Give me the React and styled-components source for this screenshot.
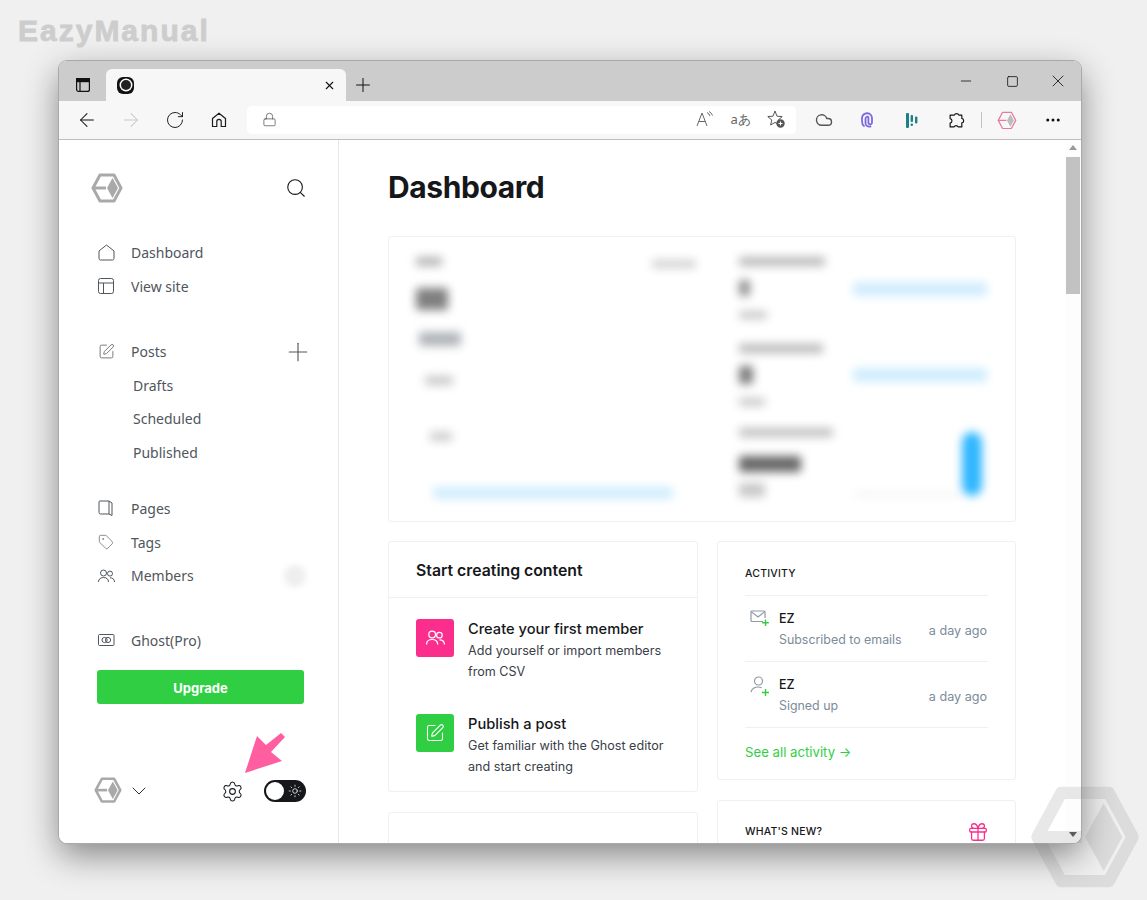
import React from 'react';
import styled, { createGlobalStyle } from 'styled-components';
import {
  ArrowLeft, ArrowRight, RotateCw, Lock, Cloud, Ellipsis, Gift, Plus, X, Minus, Square,
  Search, Settings, ChevronDown, SquarePen, Tag, Sun,
} from 'lucide-react';

const Global = createGlobalStyle`
  html, body { margin: 0; padding: 0; background: #f0f0f0; }
  body { font-family: "Noto Sans", "Open Sans", sans-serif; }
`;

const Page = styled.div`
  position: relative;
  width: 1147px;
  height: 900px;
  overflow: hidden;
  padding: 61px 0 0 59px;
  box-sizing: border-box;
`;

const Brand = styled.div`
  position: absolute;
  left: 18px;
  top: 13px;
  font: 700 30px/36px "Liberation Sans", sans-serif;
  letter-spacing: 2px;
  color: #cdcdcd;
  -webkit-text-stroke: 0.8px #cdcdcd;
`;

const WindowFrame = styled.div`
  width: 1022px;
  height: 782px;
  border-radius: 8px;
  overflow: hidden;
  background: #fff;
  box-shadow: 0 0 0 1px #a9a9a9, 0 12px 34px rgba(0, 0, 0, 0.45);
  display: flex;
  flex-direction: column;
`;

const TitleBar = styled.div`
  height: 40px;
  background: #cccccc;
  display: flex;
  align-items: flex-end;
  padding-left: 10px;
  flex: none;
`;

const SideTab = styled.div`
  width: 28px;
  height: 32px;
  margin-right: 9px;
  display: flex;
  align-items: center;
  justify-content: center;
`;

const Tab = styled.div`
  width: 240px;
  height: 32px;
  background: #f7f7f7;
  border-radius: 6px 6px 0 0;
  display: flex;
  align-items: center;
  justify-content: space-between;
  padding: 0 10px 0 11px;
  box-sizing: border-box;
`;

const Favicon = styled.div`
  width: 17px;
  height: 17px;
  border-radius: 6px;
  background: #111;
  display: flex;
  align-items: center;
  justify-content: center;
  &::after {
    content: "";
    width: 10px;
    height: 10px;
    border-radius: 50%;
    background: #222;
    box-shadow: 0 0 0 1.5px #fff;
  }
`;

const NewTab = styled.div`
  height: 32px;
  margin-left: 6px;
  display: flex;
  align-items: center;
`;

const WindowControls = styled.div`
  margin-left: auto;
  height: 40px;
  display: flex;
`;

const WindowControl = styled.div`
  width: 46px;
  display: flex;
  align-items: center;
  justify-content: center;
`;

const Toolbar = styled.div`
  height: 38px;
  background: #f7f7f7;
  border-bottom: 1px solid #bdbdbd;
  display: flex;
  align-items: center;
  padding-left: 6px;
  flex: none;
`;

const ToolButton = styled.div`
  width: 44px;
  height: 28px;
  flex: none;
  display: flex;
  align-items: center;
  justify-content: center;
`;

const Address = styled.div`
  width: 549px;
  height: 28px;
  margin: 0 6px;
  background: #fff;
  border-radius: 5px;
  display: flex;
  align-items: center;
  padding: 0 2px 2px 15px;
  box-sizing: border-box;
`;

const AddressActions = styled.div`
  margin-left: auto;
  display: flex;
  align-items: center;
`;

const AddressAction = styled.div`
  width: 35.5px;
  height: 28px;
  display: flex;
  align-items: center;
  justify-content: center;
  font: 400 13px "Noto Sans", sans-serif;
  color: #666;
`;

const ToolDivider = styled.div`
  width: 1px;
  height: 16px;
  background: #c4c4c4;
  margin: 0 3px;
  flex: none;
`;

const LogoSlot = styled(ToolButton)`
  margin-right: 2px;
`;

const Body = styled.div`
  flex: 1;
  display: flex;
  min-height: 0;
  background: #fff;
`;

const Sidebar = styled.aside`
  position: relative;
  width: 280px;
  flex: none;
  box-sizing: border-box;
  border-right: 1px solid #e6e8ea;
  padding: 33px 32px 0 38px;
  display: flex;
  flex-direction: column;
`;

const SideHead = styled.div`
  height: 30px;
  display: flex;
  align-items: center;
  justify-content: space-between;
  margin: 0 -1px 33px -6px;
`;

const NavGroup = styled.div`
  display: flex;
  flex-direction: column;
  margin-bottom: ${(p) => p.$gap || 0}px;
`;

const NavItem = styled.div`
  height: 33.5px;
  display: flex;
  align-items: center;
  color: #50565c;
  font-size: 14px;
`;

const NavIcon = styled.span`
  width: 18px;
  height: 18px;
  margin-right: 16px;
  display: flex;
  align-items: center;
  justify-content: center;
  color: #50565c;
`;

const SubItem = styled(NavItem)`
  padding-left: 36px;
`;

const NavEnd = styled.span`
  margin-left: auto;
  margin-right: ${(p) => p.$m || 0}px;
  display: flex;
  align-items: center;
`;

const Badge = styled.span`
  width: 22px;
  height: 22px;
  border-radius: 50%;
  background: #eeeeee;
  filter: blur(3px);
`;

const Upgrade = styled.div`
  width: 207px;
  height: 34px;
  margin-top: 13px;
  border-radius: 3px;
  background: #30cf43;
  color: #fff;
  font: 700 13px/36px Inter, sans-serif;
  text-align: center;
`;

const SideFoot = styled.div`
  margin-top: 73px;
  height: 28px;
  display: flex;
  align-items: center;
`;

const Avatar = styled.span`
  width: 28px;
  height: 28px;
  margin: 0 5px 0 -3px;
  display: flex;
  filter: blur(0.6px);
`;

const Switch = styled.div`
  width: 42px;
  height: 22px;
  border-radius: 11px;
  background: #15171a;
  display: flex;
  align-items: center;
  justify-content: space-between;
  padding: 0 4px 0 2px;
  box-sizing: border-box;
  margin-left: 20px;
  &::before {
    content: "";
    width: 18px;
    height: 18px;
    border-radius: 50%;
    background: #fff;
  }
`;

const Pointer = styled.svg`
  position: absolute;
  left: 185px;
  top: 592px;
`;

const Main = styled.main`
  flex: 1;
  min-width: 0;
  overflow: hidden;
  padding: 27px 49px 0 49px;
`;

const Heading = styled.h1`
  margin: 0 0 28px;
  font: 700 30px/41px Inter, sans-serif;
  color: #15171a;
  letter-spacing: -0.4px;
`;

const Card = styled.section`
  border: 1px solid #eef0f2;
  border-radius: 3px;
  box-sizing: border-box;
  background: #fff;
`;

const ChartCard = styled(Card)`
  height: 286px;
  margin-bottom: 19px;
  display: grid;
  grid-template-columns: 350px 1fr;
  overflow: hidden;
`;

const ChartLeft = styled.div`
  padding: 20px 43px 0 27px;
  display: flex;
  flex-direction: column;
  filter: blur(5px);
`;

const ChartHead = styled.div`
  display: flex;
  justify-content: space-between;
`;

const ChartRight = styled.div`
  padding: 20px 28px 0 0;
  display: flex;
  flex-direction: column;
  filter: blur(5px);
`;

const StatRow = styled.div`
  height: ${(p) => p.$h}px;
  display: flex;
  justify-content: space-between;
`;

const StatText = styled.div`
  display: flex;
  flex-direction: column;
`;

const ChartFoot = styled.div`
  display: flex;
  align-items: flex-end;
  column-gap: 2px;
  padding: 0 5px 6.5px 0;
`;

const Smudge = styled.div`
  width: ${(p) => p.$w}px;
  height: ${(p) => p.$h}px;
  margin-top: ${(p) => p.$t || 0}px;
  margin-left: ${(p) => p.$l || 0}px;
  background: ${(p) => p.$c};
  border-radius: ${(p) => p.$r || 2}px;
  flex: none;
`;

const Columns = styled.div`
  display: grid;
  grid-template-columns: 310px 299px;
  column-gap: 19px;
  align-items: start;
`;

const Stack = styled.div`
  display: flex;
  flex-direction: column;
  row-gap: 20px;
`;

const CardTitle = styled.div`
  height: 55px;
  padding-left: 27px;
  border-bottom: 1px solid #eef0f2;
  font: 600 15.8px/57px Inter, sans-serif;
  color: #15171a;
`;

const ActionList = styled.div`
  padding: 21px 27px 0;
  height: 193px;
  box-sizing: border-box;
  display: flex;
  flex-direction: column;
  row-gap: 32px;
`;

const ActionRow = styled.div`
  display: flex;
  column-gap: 14px;
`;

const ActionIcon = styled.div`
  width: 38px;
  height: 38px;
  border-radius: 3px;
  flex: none;
  background: ${(p) => p.$c};
  color: #fff;
  display: flex;
  align-items: center;
  justify-content: center;
`;

const ActionName = styled.div`
  font: 500 14.65px/20px Inter, sans-serif;
  color: #15171a;
`;

const ActionText = styled.div`
  margin-top: 1px;
  font: 400 12.6px/21px Inter, sans-serif;
  color: #394047;
`;

const Blank = styled(Card)`
  height: 60px;
`;

const Side = styled.div`
  padding: 0 27px;
`;

const SideLabel = styled.div`
  display: flex;
  align-items: center;
  justify-content: space-between;
  height: ${(p) => p.$h}px;
  padding-top: ${(p) => p.$top || 0}px;
  box-sizing: border-box;
  font: 500 10.5px/1 Inter, sans-serif;
  letter-spacing: 0.2px;
  color: #15171a;
  text-transform: uppercase;
`;

const ActivityRow = styled.div`
  height: 66px;
  border-top: 1px solid #eef0f2;
  display: flex;
  align-items: center;
  box-sizing: border-box;
`;

const ActivityIcon = styled.div`
  width: 34px;
  height: 44px;
  flex: none;
  padding: 3px 4px 0 0;
  box-sizing: border-box;
  display: flex;
  justify-content: center;
  align-items: flex-start;
`;

const ActivityName = styled.div`
  font: 500 12.5px/22px Inter, sans-serif;
  color: #15171a;
`;

const ActivityText = styled.div`
  font: 400 12.4px/20px Inter, sans-serif;
  color: #7c8b9a;
`;

const Ago = styled.div`
  margin: 0 1px 0 auto;
  padding-top: 3px;
  font: 400 12.6px Inter, sans-serif;
  color: #7c8b9a;
`;

const SeeAll = styled.div`
  height: 51px;
  border-top: 1px solid #eef0f2;
  font: 400 13.2px/49px Inter, sans-serif;
  color: #30cf43;
`;

const Scrollbar = styled.div`
  width: 16px;
  flex: none;
  background: #fdfdfd;
  display: flex;
  flex-direction: column;
  align-items: center;
  padding-top: 5px;
  box-sizing: border-box;
`;

const ScrollUp = styled.div`
  border: 4px solid transparent;
  border-top: 0;
  border-bottom: 5px solid #9a9a9a;
`;

const ScrollThumb = styled.div`
  width: 14px;
  height: 137px;
  margin-top: 7px;
  background: #c2c2c2;
`;

const ScrollDown = styled.div`
  margin-top: auto;
  margin-bottom: 6px;
  border: 4px solid transparent;
  border-bottom: 0;
  border-top: 5px solid #555;
`;

const Watermark = styled.svg`
  position: absolute;
  left: 1030px;
  top: 786px;
  opacity: 0.16;
`;

const Logo = ({ size = 32, color = '#a9a9a9', dia, stroke = 3 }) => (
  <svg width={size} height={size * 30 / 32} viewBox="0 0 32 30" fill="none">
    <path d="M9 2H23L30 15L23 28H9L2 15Z" stroke={color} strokeWidth={stroke} strokeLinejoin="round" />
    <path d="M2 15H15" stroke={color} strokeWidth={stroke} />
    <path d="M21.5 5L27 15L21.5 25L16 15Z" fill={dia || color} />
  </svg>
);

const HomeOutline = () => (
  <svg width="17" height="17" viewBox="0 0 17 17" fill="none" stroke="currentColor" strokeWidth="1">
    <path d="M1 7L8.5 1L16 7V14.5A1.5 1.5 0 0 1 14.5 16H2.5A1.5 1.5 0 0 1 1 14.5Z" />
  </svg>
);

const LayoutOutline = () => (
  <svg width="16" height="16" viewBox="0 0 16 16" fill="none" stroke="currentColor" strokeWidth="1">
    <rect x="0.5" y="0.5" width="15" height="15" rx="2" />
    <path d="M0.5 5H15.5M5.5 5V15.5" />
  </svg>
);

const PagesOutline = () => (
  <svg width="16" height="17" viewBox="0 0 16 17" fill="none" stroke="currentColor" strokeWidth="1">
    <path d="M2 1H11V14H2.5A1.5 1.5 0 0 1 1 12.5V2A1 1 0 0 1 2 1Z" />
    <path d="M11 1L14 3V15.5L11 14" />
  </svg>
);

const WalletOutline = () => (
  <svg width="17" height="12" viewBox="0 0 17 12" fill="none" stroke="currentColor" strokeWidth="1">
    <rect x="0.5" y="0.5" width="15.5" height="11" rx="1" />
    <circle cx="6.6" cy="6" r="2.6" />
    <circle cx="10" cy="6" r="2.6" />
  </svg>
);

const MembersOutline = ({ size = 17, w = 1 }) => (
  <svg width={size} height={size * 14 / 17} viewBox="0 0 17 14" fill="none" stroke="currentColor" strokeWidth={w}>
    <circle cx="5.5" cy="4" r="3" />
    <path d="M0.5 13C0.5 10 2.5 8.5 5.5 8.5S10.5 10 10.5 13" />
    <circle cx="12" cy="4.6" r="2.5" />
    <path d="M12 8.8C14.5 8.8 16.5 10 16.5 13" />
  </svg>
);

const EdgeHome = () => (
  <svg width="16" height="16" viewBox="0 0 16 16" fill="none" stroke="#1b1b1b" strokeWidth="1.2">
    <path d="M1.5 6.5L8 1.2L14.5 6.5V14.5H10.2V9.5A2.2 2.2 0 0 0 5.8 9.5V14.5H1.5Z" strokeLinejoin="round" />
  </svg>
);

const PanelTab = () => (
  <svg width="14" height="14" viewBox="0 0 14 14" fill="none" stroke="#111" strokeWidth="1.2">
    <rect x="0.6" y="0.6" width="12.8" height="12.8" rx="2" />
    <rect x="0.6" y="0.6" width="12.8" height="3" fill="#111" />
    <path d="M4 3.6V13.4" />
  </svg>
);

const ReadAloud = () => (
  <svg width="18" height="16" viewBox="0 0 18 16" fill="none" stroke="#666" strokeWidth="1">
    <path d="M1 15L6 2L11 15M2.8 10.5H9.2" />
    <path d="M11 1.5A6 6 0 0 1 14 5M13 0.5A7 7 0 0 1 16.5 4.5" />
  </svg>
);

const FavoriteAdd = () => (
  <svg width="18" height="18" viewBox="0 0 18 18" fill="none">
    <path d="M8 1L10 6.2L15.2 6.6L11.2 10L12.4 15L8 12.4L3.6 15L4.8 10L0.8 6.6L6 6.2Z" stroke="#555" strokeWidth="1" strokeLinejoin="round" />
    <circle cx="13.5" cy="13.5" r="4.2" fill="#555" />
    <path d="M13.5 11.5V15.5M11.5 13.5H15.5" stroke="#fff" strokeWidth="1" />
  </svg>
);

const AtMark = () => (
  <svg width="14" height="16" viewBox="0 0 14 16" fill="none" stroke="#7d68e3" strokeWidth="1.8" strokeLinecap="round">
    <path d="M3 14C1.5 13 1 11.5 1 9V6A5 5 0 0 1 11 6.5V10.5A1.8 1.8 0 0 1 7.4 10.5V6" />
    <path d="M9.5 14.5C7 15 4.5 14 4.5 11V6.5A2 2 0 0 1 7.4 5" />
  </svg>
);

const BarsMark = () => (
  <svg width="12" height="15" viewBox="0 0 12 15" fill="#1f7f88">
    <rect x="0" y="0" width="3" height="15" rx="1" />
    <rect x="4.6" y="2" width="2.4" height="7" rx="1" />
    <rect x="4.6" y="10.5" width="2.4" height="2.5" rx="1" />
    <rect x="9" y="3.5" width="2.4" height="7" rx="1" />
  </svg>
);

const ExtensionPiece = () => (
  <svg width="17" height="17" viewBox="0 0 16 16" fill="none" stroke="#111" strokeWidth="1.1" strokeLinejoin="round">
    <path d="M6 3A2.2 2.2 0 0 1 10.2 3H13V6A2.2 2.2 0 0 1 13 10.3V14H9.5A2 2 0 0 0 5.8 14H2V10.5A2.2 2.2 0 0 0 2 6.2V3Z" />
  </svg>
);

const MailAdd = () => (
  <svg width="20" height="17" viewBox="0 0 20 17">
    <g fill="none" stroke="#8e9aa5" strokeWidth="1.2">
      <path d="M13 11.5H2A1 1 0 0 1 1 10.5V2A1 1 0 0 1 2 1H14A1 1 0 0 1 15 2V8" />
      <path d="M1.2 1.6L8 7L14.8 1.6" />
    </g>
    <path d="M15.5 9.5V16M12.2 12.8H18.8" stroke="#30cf43" strokeWidth="1.4" />
  </svg>
);

const PersonAdd = () => (
  <svg width="20" height="21" viewBox="0 0 20 21">
    <g fill="none" stroke="#8e9aa5" strokeWidth="1.2">
      <circle cx="8.5" cy="5" r="4" />
      <path d="M1 16C2 12.5 5 11 8.5 11C9.5 11 10.5 11.2 11.5 11.6" />
    </g>
    <path d="M15.5 13V20M12 16.5H19" stroke="#30cf43" strokeWidth="1.4" />
  </svg>
);

export default function App() {
  return (
    <Page>
      <Global />
      <Brand>EazyManual</Brand>
      <WindowFrame>
        <TitleBar>
          <SideTab><PanelTab /></SideTab>
          <Tab>
            <Favicon />
            <X size={13} strokeWidth={2} color="#111" />
          </Tab>
          <NewTab><Plus size={22} strokeWidth={1.1} color="#111" /></NewTab>
          <WindowControls>
            <WindowControl><Minus size={16} strokeWidth={1.2} color="#111" /></WindowControl>
            <WindowControl><Square size={13} strokeWidth={1.5} color="#111" /></WindowControl>
            <WindowControl><X size={20} strokeWidth={1} color="#111" /></WindowControl>
          </WindowControls>
        </TitleBar>
        <Toolbar>
          <ToolButton><ArrowLeft size={22} strokeWidth={1.1} color="#111" /></ToolButton>
          <ToolButton><ArrowRight size={22} strokeWidth={1.1} color="#c8c8c8" /></ToolButton>
          <ToolButton><RotateCw size={20} strokeWidth={1.1} color="#111" /></ToolButton>
          <ToolButton><EdgeHome /></ToolButton>
          <Address>
            <Lock size={15} strokeWidth={1.1} color="#444" />
            <AddressActions>
              <AddressAction><ReadAloud /></AddressAction>
              <AddressAction>aあ</AddressAction>
              <AddressAction><FavoriteAdd /></AddressAction>
            </AddressActions>
          </Address>
          <ToolButton><Cloud size={18} strokeWidth={1.9} color="#555" /></ToolButton>
          <ToolButton><AtMark /></ToolButton>
          <ToolButton><BarsMark /></ToolButton>
          <ToolButton><ExtensionPiece /></ToolButton>
          <ToolDivider />
          <LogoSlot><Logo size={20} color="#e87a9c" dia="#bdbdbd" stroke={2} /></LogoSlot>
          <ToolButton><Ellipsis size={18} strokeWidth={2} color="#111" /></ToolButton>
        </Toolbar>
        <Body>
          <Sidebar>
            <SideHead>
              <Logo />
              <Search size={22} strokeWidth={1.2} color="#15171a" />
            </SideHead>
            <NavGroup $gap={32}>
              <NavItem><NavIcon><HomeOutline /></NavIcon>Dashboard</NavItem>
              <NavItem><NavIcon><LayoutOutline /></NavIcon>View site</NavItem>
            </NavGroup>
            <NavGroup $gap={23}>
              <NavItem>
                <NavIcon><SquarePen size={17} strokeWidth={1.1} /></NavIcon>Posts
                <NavEnd $m={-7}><Plus size={30} strokeWidth={0.9} color="#50565c" /></NavEnd>
              </NavItem>
              <SubItem>Drafts</SubItem>
              <SubItem>Scheduled</SubItem>
              <SubItem>Published</SubItem>
            </NavGroup>
            <NavGroup $gap={31}>
              <NavItem><NavIcon><PagesOutline /></NavIcon>Pages</NavItem>
              <NavItem><NavIcon><Tag size={16} strokeWidth={1} /></NavIcon>Tags</NavItem>
              <NavItem><NavIcon><MembersOutline /></NavIcon>Members<NavEnd><Badge /></NavEnd></NavItem>
            </NavGroup>
            <NavItem><NavIcon><WalletOutline /></NavIcon>Ghost(Pro)</NavItem>
            <Upgrade>Upgrade</Upgrade>
            <SideFoot>
              <Avatar><Logo size={28} /></Avatar>
              <ChevronDown size={24} strokeWidth={0.9} color="#15171a" />
              <Settings size={23} strokeWidth={1.1} color="#15171a" style={{ marginLeft: 'auto' }} />
              <Switch><Sun size={14} strokeWidth={1.3} color="#fff" /></Switch>
            </SideFoot>
            <Pointer width="42" height="42" viewBox="0 0 42 42">
              <path d="M1 41L13 4L22 13L37 1L41 5L27 20L38 29Z" fill="#ff5fa0" />
            </Pointer>
          </Sidebar>
          <Main>
            <Heading>Dashboard</Heading>
            <ChartCard>
              <ChartLeft>
                <ChartHead>
                  <Smudge $w={26} $h={9} $c="#b4b4b4" />
                  <Smudge $w={44} $h={8} $c="#d0d0d0" $t={3} />
                </ChartHead>
                <Smudge $w={32} $h={22} $c="#808080" $t={20} />
                <Smudge $w={42} $h={14} $c="#b0b4b8" $t={22} $l={3} />
                <Smudge $w={28} $h={9} $c="#c8c8c8" $t={30} $l={9} />
                <Smudge $w={22} $h={9} $c="#cccccc" $t={47} $l={14} />
                <Smudge $w={240} $h={12} $c="#d0edfd" $t={46} $l={17} />
              </ChartLeft>
              <ChartRight>
                <StatRow $h={87}>
                  <StatText>
                    <Smudge $w={86} $h={9} $c="#b8b8b8" />
                    <Smudge $w={11} $h={16} $c="#909090" $t={13.5} />
                    <Smudge $w={28} $h={8} $c="#c8c8c8" $t={15} />
                  </StatText>
                  <Smudge $w={134} $h={14} $c="#d0edfd" $t={24.5} />
                </StatRow>
                <StatRow $h={84}>
                  <StatText>
                    <Smudge $w={84} $h={9} $c="#b8b8b8" />
                    <Smudge $w={14} $h={18} $c="#7c7c7c" $t={12.5} />
                    <Smudge $w={26} $h={8} $c="#c8c8c8" $t={14} />
                  </StatText>
                  <Smudge $w={134} $h={14} $c="#d0edfd" $t={23.5} />
                </StatRow>
                <StatRow $h={74}>
                  <StatText>
                    <Smudge $w={94} $h={9} $c="#c0c0c0" />
                    <Smudge $w={62} $h={16} $c="#686868" $t={18.5} />
                    <Smudge $w={26} $h={14} $c="#c8c8c8" $t={11} />
                  </StatText>
                  <ChartFoot>
                    <Smudge $w={105} $h={3} $c="#ececec" />
                    <Smudge $w={20} $h={64} $c="#2fb6ff" $r={10} />
                  </ChartFoot>
                </StatRow>
              </ChartRight>
            </ChartCard>
            <Columns>
              <Stack>
                <Card>
                  <CardTitle>Start creating content</CardTitle>
                  <ActionList>
                    <ActionRow>
                      <ActionIcon $c="#fb2d8d"><MembersOutline size={19} w={1.1} /></ActionIcon>
                      <div>
                        <ActionName>Create your first member</ActionName>
                        <ActionText>Add yourself or import members<br />from CSV</ActionText>
                      </div>
                    </ActionRow>
                    <ActionRow>
                      <ActionIcon $c="#30cf43"><SquarePen size={20} strokeWidth={1.3} /></ActionIcon>
                      <div>
                        <ActionName>Publish a post</ActionName>
                        <ActionText>Get familiar with the Ghost editor<br />and start creating</ActionText>
                      </div>
                    </ActionRow>
                  </ActionList>
                </Card>
                <Blank />
              </Stack>
              <Stack>
                <Card>
                  <Side>
                    <SideLabel $h={53} $top={12}>Activity</SideLabel>
                    <ActivityRow>
                      <ActivityIcon><MailAdd /></ActivityIcon>
                      <div>
                        <ActivityName>EZ</ActivityName>
                        <ActivityText>Subscribed to emails</ActivityText>
                      </div>
                      <Ago>a day ago</Ago>
                    </ActivityRow>
                    <ActivityRow>
                      <ActivityIcon><PersonAdd /></ActivityIcon>
                      <div>
                        <ActivityName>EZ</ActivityName>
                        <ActivityText>Signed up</ActivityText>
                      </div>
                      <Ago>a day ago</Ago>
                    </ActivityRow>
                    <SeeAll>See all activity →</SeeAll>
                  </Side>
                </Card>
                <Card>
                  <Side>
                    <SideLabel $h={62}>
                      What's new?
                      <Gift size={22} strokeWidth={1.4} color="#fb2d8d" style={{ marginRight: -1 }} />
                    </SideLabel>
                  </Side>
                </Card>
              </Stack>
            </Columns>
          </Main>
          <Scrollbar>
            <ScrollUp />
            <ScrollThumb />
            <ScrollDown />
          </Scrollbar>
        </Body>
      </WindowFrame>
      <Watermark width="110" height="102" viewBox="0 0 32 30" fill="none">
        <path d="M9 2H23L30 15L23 28H9L2 15Z" stroke="#777" strokeWidth="3.6" strokeLinejoin="round" />
        <path d="M2 15H15" stroke="#777" strokeWidth="3.6" />
        <path d="M21.5 5L27 15L21.5 25L16 15Z" fill="#777" />
      </Watermark>
    </Page>
  );
}
